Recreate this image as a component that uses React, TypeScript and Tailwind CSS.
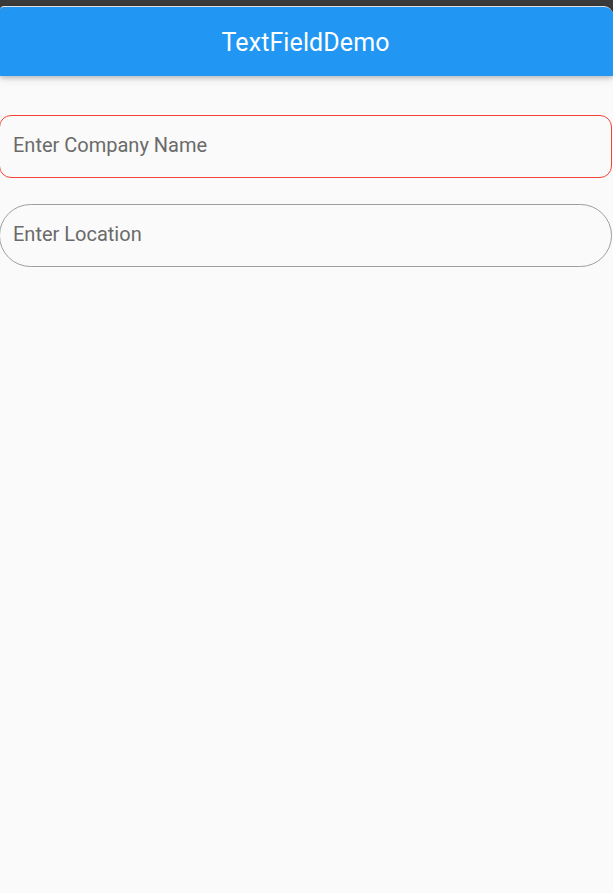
import React from "react";

export default function App() {
  return (
    <div className="w-[613px] h-[893px] bg-[#fafafa] overflow-hidden relative" style={{ fontFamily: "Roboto, 'Noto Sans', sans-serif" }}>
      <div className="h-[6px] bg-[#3a3a3a]" />
      <div className="bg-[#3a3a3a]">
        <div className="h-[70px] bg-[#2196f3] rounded-tl-[4px] rounded-tr-[9px] border-t border-[#e0e0e0] flex items-center justify-center shadow-[0_2px_4px_rgba(0,0,0,0.2),0_4px_8px_rgba(0,0,0,0.08)] relative z-10">
          <span className="text-white text-[25px] leading-none tracking-[0.1px] mt-[1px] mr-[2px]">TextFieldDemo</span>
        </div>
      </div>
      <div className="flex flex-col gap-[26px] pt-[39px] ml-[-1px] mr-[1px]">
        <div className="h-[63px] border-[1.4px] border-[#f44336] rounded-[12px] flex items-center pl-[13px]">
          <span className="text-[20px] text-[#6a6a6a] leading-none mt-[-3px]">Enter Company Name</span>
        </div>
        <div className="h-[63px] border-[1.2px] border-[#9e9e9e] rounded-full flex items-center pl-[13px]">
          <span className="text-[20px] text-[#6a6a6a] leading-none mt-[-3px]">Enter Location</span>
        </div>
      </div>
    </div>
  );
}
